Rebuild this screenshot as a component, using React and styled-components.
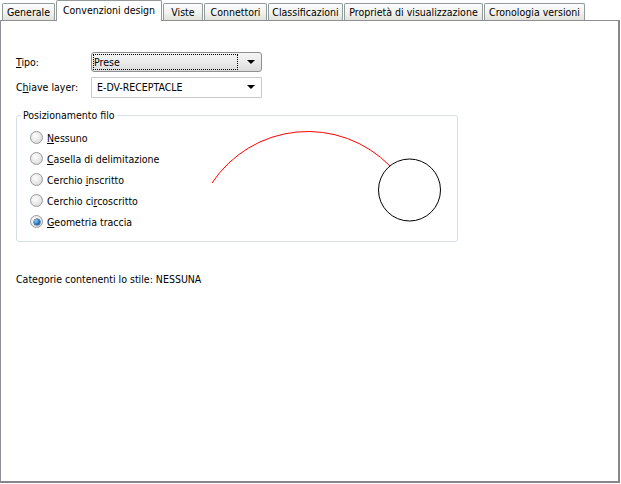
import styled, { createGlobalStyle } from "styled-components";

const GlobalStyle = createGlobalStyle`
  html, body {
    margin: 0;
    padding: 0;
    background: #ffffff;
  }
  body {
    font-family: "DejaVu Sans Condensed", "Liberation Sans", Arial, sans-serif;
    font-size: 10.5px;
    color: #000;
  }
`;

const tabs = [
  { label: "Generale", width: 53 },
  { label: "Convenzioni design", width: 106, active: true },
  { label: "Viste", width: 40 },
  { label: "Connettori", width: 63 },
  { label: "Classificazioni", width: 75 },
  { label: "Proprietà di visualizzazione", width: 139 },
  { label: "Cronologia versioni", width: 101 },
];

const radios = [
  { pre: "", key: "N", post: "essuno" },
  { pre: "", key: "C", post: "asella di delimitazione" },
  { pre: "Cerchio ", key: "i", post: "nscritto" },
  { pre: "Cerchio ci", key: "r", post: "coscritto" },
  { pre: "", key: "G", post: "eometria traccia", checked: true },
];

const App = () => {
  return (
    <Window>
      <GlobalStyle />
      <TabBar>
        {tabs.map((t) => (
          <Tab key={t.label} $active={t.active} style={{ width: t.width }}>
            {t.label}
          </Tab>
        ))}
      </TabBar>
      <Panel>
        <Form>
          <Label>
            <u>T</u>ipo:
          </Label>
          <Combo $focused>
            <ComboText $focused>Prese</ComboText>
            <Arrow />
          </Combo>
          <Label>
            C<u>h</u>iave layer:
          </Label>
          <Combo>
            <ComboText>E-DV-RECEPTACLE</ComboText>
            <Arrow />
          </Combo>
        </Form>

        <Group>
          <Legend>Posizionamento filo</Legend>
          <GroupBody>
            <RadioList>
              {radios.map((r) => (
                <RadioRow key={r.post}>
                  <RadioCircle $checked={r.checked} />
                  <span>
                    {r.pre}
                    <u>{r.key}</u>
                    {r.post}
                  </span>
                </RadioRow>
              ))}
            </RadioList>
            <Drawing width="260" height="108" viewBox="0 0 260 108">
              <g transform="translate(-195 -122)">
                <path
                  d="M212 183 A115 115 0 0 1 390 166"
                  fill="none"
                  stroke="#ff0000"
                  strokeWidth="1"
                />
                <circle
                  cx="409.5"
                  cy="190"
                  r="31"
                  fill="none"
                  stroke="#000"
                  strokeWidth="1"
                />
              </g>
            </Drawing>
          </GroupBody>
        </Group>

        <Footer>Categorie contenenti lo stile: NESSUNA</Footer>
      </Panel>
    </Window>
  );
};

const Window = styled.div`
  width: 621px;
  height: 484px;
  display: flex;
  flex-direction: column;
  background: #fff;
  overflow: hidden;
`;

const TabBar = styled.div`
  display: flex;
  align-items: flex-end;
  gap: 1px;
  height: 20px;
  padding-left: 2px;
  position: relative;
  z-index: 1;
`;

const Tab = styled.div`
  box-sizing: border-box;
  height: ${({ $active }) => ($active ? "21px" : "17px")};
  margin-bottom: ${({ $active }) => ($active ? "-1px" : "0")};
  border: 1px solid #919b9c;
  border-bottom: none;
  border-radius: 2px 2px 0 0;
  background: ${({ $active }) =>
    $active ? "#ffffff" : "linear-gradient(#fcfcfe, #f0f0ec 60%, #e2e2da)"};
  display: flex;
  align-items: center;
  justify-content: center;
  padding-bottom: ${({ $active }) => ($active ? "3px" : "0")};
  white-space: nowrap;
`;

const Panel = styled.div`
  flex: 1;
  margin-right: 1px;
  margin-bottom: 1px;
  border: 1px solid #8f8f9a;
  border-right-width: 2px;
  border-bottom-width: 2px;
  border-right-color: #86868f;
  border-bottom-color: #86868f;
  padding: 31px 15px 0 15px;
  display: flex;
  flex-direction: column;
`;

const Form = styled.div`
  display: grid;
  grid-template-columns: 75px 171px;
  grid-auto-rows: 20px;
  row-gap: 5px;
  align-items: center;
`;

const Label = styled.div``;

const Combo = styled.div`
  box-sizing: border-box;
  height: ${({ $focused }) => ($focused ? "20px" : "21px")};
  border: 1px solid ${({ $focused }) => ($focused ? "#8e8f8f" : "#c8c8c8")};
  border-radius: ${({ $focused }) => ($focused ? "3px" : "1px")};
  background: ${({ $focused }) =>
    $focused ? "linear-gradient(#f4f4f4, #ebebeb 50%, #dcdcdc)" : "#fff"};
  display: flex;
  align-items: center;
  padding: 0 6px 0 2px;
`;

const ComboText = styled.div`
  flex: 1;
  height: 14px;
  line-height: 14px;
  margin-right: 10px;
  padding-left: ${({ $focused }) => ($focused ? "0" : "3px")};
  outline: ${({ $focused }) => ($focused ? "1px dotted #000" : "none")};
`;

const Arrow = styled.div`
  width: 0;
  height: 0;
  border-left: 4px solid transparent;
  border-right: 4px solid transparent;
  border-top: 4px solid #000;
`;

const Group = styled.fieldset`
  width: 442px;
  box-sizing: border-box;
  margin: 12px 0 0 0;
  padding: 0 0 9px 0;
  min-width: 0;
  border: 1px solid #d5dfe5;
  border-radius: 3px;
`;

const Legend = styled.legend`
  margin-left: 4px;
  padding: 0 2px;
  line-height: 13px;
`;

const GroupBody = styled.div`
  display: flex;
  padding-top: 5px;
`;

const RadioList = styled.div`
  box-sizing: border-box;
  display: flex;
  flex-direction: column;
  width: 178px;
  padding-left: 13px;
`;

const RadioRow = styled.div`
  display: flex;
  align-items: center;
  gap: 4px;
  height: 21px;
`;

const RadioCircle = styled.span`
  box-sizing: border-box;
  width: 13px;
  height: 13px;
  border-radius: 50%;
  border: 1px solid #9a9a9a;
  background: radial-gradient(circle at 40% 35%, #ffffff, #e6e6e6 55%, #cfcfcf);
  display: flex;
  align-items: center;
  justify-content: center;

  &::after {
    content: "";
    display: ${({ $checked }) => ($checked ? "block" : "none")};
    width: 6px;
    height: 6px;
    border-radius: 50%;
    background: radial-gradient(circle at 35% 35%, #8fd0ff, #1a72c0 55%, #0b3d72);
    box-shadow: 0 0 0 0.5px #123a60;
  }
`;

const Drawing = styled.svg`
  display: block;
  margin-top: -5px;
`;

const Footer = styled.div`
  margin-top: 31px;
`;

export default App;
